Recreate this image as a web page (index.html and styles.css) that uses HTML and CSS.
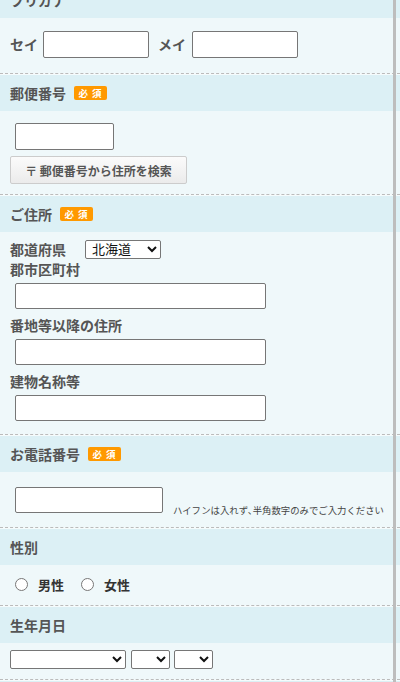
FILE: index.html
```html
<!DOCTYPE html>
<html lang="ja">
<head>
<meta charset="utf-8">
<title>フォーム</title>
<link rel="stylesheet" href="styles.css">
</head>
<body>
<div class="page">
  <section class="sec">
    <div class="sec-h">フリガナ</div>
    <div class="sec-b b-kana">
      <span class="lbl">セイ</span>
      <input type="text" class="in in-kana in-sei">
      <span class="lbl lbl-mei">メイ</span>
      <input type="text" class="in in-kana in-mei">
    </div>
  </section>

  <section class="sec">
    <div class="sec-h">郵便番号<span class="req">必 須</span></div>
    <div class="sec-b b-zip">
      <input type="text" class="in in-zip">
      <button type="button" class="btn-zip">〒 郵便番号から住所を検索</button>
    </div>
  </section>

  <section class="sec">
    <div class="sec-h">ご住所<span class="req">必 須</span></div>
    <div class="sec-b b-addr">
      <div class="pref-row">
        <span class="lbl">都道府県</span>
        <select class="sel sel-pref"><option>北海道</option></select>
      </div>
      <div class="lbl lbl-line">郡市区町村</div>
      <input type="text" class="in in-addr">
      <div class="lbl lbl-line">番地等以降の住所</div>
      <input type="text" class="in in-addr">
      <div class="lbl lbl-line">建物名称等</div>
      <input type="text" class="in in-addr">
    </div>
  </section>

  <section class="sec">
    <div class="sec-h">お電話番号<span class="req">必 須</span></div>
    <div class="sec-b b-tel">
      <input type="text" class="in in-tel">
      <span class="hint">ハイフンは入れず､半角数字のみでご入力ください</span>
    </div>
  </section>

  <section class="sec">
    <div class="sec-h">性別</div>
    <div class="sec-b b-sex">
      <label class="radio-l"><input type="radio" name="sex" class="rad">男性</label>
      <label class="radio-l radio-2"><input type="radio" name="sex" class="rad">女性</label>
    </div>
  </section>

  <section class="sec">
    <div class="sec-h">生年月日</div>
    <div class="sec-b b-birth">
      <select class="sel sel-y"><option></option></select>
      <select class="sel sel-m"><option></option></select>
      <select class="sel sel-d"><option></option></select>
    </div>
  </section>

  <div class="sec-h sec-next"></div>
</div>
<div class="vbar"></div>
</body>
</html>
```

FILE: styles.css
```css
* { box-sizing: border-box; }

html, body {
  margin: 0;
  padding: 0;
}

body {
  background: #f5fbfc;
  font-family: "Noto Sans CJK JP", "Noto Sans", sans-serif;
  color: #555;
  overflow: hidden;
}

.page {
  margin-top: -18px;
}

.sec {
  border-bottom: 1px dashed #bbb;
  margin-bottom: 1px;
}

.sec-h {
  height: 36px;
  background: #dcf0f5;
  display: flex;
  align-items: center;
  padding-left: 10px;
  font-size: 14px;
  font-weight: bold;
  color: #555;
}

.sec-next {
  height: 40px;
}

.req {
  display: inline-flex;
  align-items: center;
  justify-content: center;
  width: 33px;
  height: 14px;
  margin-left: 8px;
  background: #ff9900;
  color: #fff;
  border-radius: 2px;
  font-size: 9.5px;
  font-weight: bold;
  letter-spacing: 1px;
}

.sec-b {
  background: #eff8fa;
  padding: 0 10px;
}

.lbl {
  font-size: 14px;
  font-weight: bold;
  color: #555;
}

.in {
  height: 27px;
  border: 1px solid #767676;
  border-radius: 2px;
  background: #fff;
  padding: 0 4px;
  font-family: inherit;
  font-size: 13px;
}

/* フリガナ */
.b-kana {
  height: 55px;
  padding-top: 13px;
  display: flex;
  align-items: flex-start;
}
.b-kana .lbl {
  line-height: 27px;
}
.in-kana {
  width: 106px;
}
.in-sei { margin-left: 5px; }
.lbl-mei { margin-left: 9px; }
.in-mei { margin-left: 6px; }

/* 郵便番号 */
.b-zip {
  height: 83px;
  padding-top: 12px;
}
.in-zip {
  display: block;
  width: 99px;
  margin-left: 5px;
}
.btn-zip {
  display: block;
  margin-top: 6px;
  width: 177px;
  height: 28px;
  border: 1px solid #ccc;
  border-radius: 2px;
  background: linear-gradient(#fbfbfb, #ebebeb);
  color: #555;
  font-family: inherit;
  font-size: 12px;
  font-weight: bold;
  padding: 0;
  text-align: center;
}

/* ご住所 */
.b-addr {
  height: 202px;
  padding-top: 7px;
}
.pref-row {
  height: 20px;
  display: flex;
  align-items: center;
}
.pref-row .lbl {
  line-height: 20px;
}
.sel {
  height: 19px;
  border: 1px solid #767676;
  border-radius: 2px;
  background-color: #fff;
  font-family: "Liberation Sans", "Noto Sans CJK JP", sans-serif;
  font-size: 13px;
  color: #111;
  padding: 0 0 0 2px;
}
.sel-pref {
  width: 76px;
  margin-left: 19px;
}
.lbl-line {
  line-height: 20px;
  height: 20px;
}
.in-addr {
  display: block;
  width: 251px;
  height: 26px;
  margin: 4px 0 6px 5px;
}

/* お電話番号 */
.b-tel {
  height: 55px;
  padding-top: 15px;
  display: flex;
  align-items: flex-end;
}
.in-tel {
  width: 148px;
  height: 26px;
  margin-left: 5px;
  align-self: flex-start;
}
.hint {
  margin-left: 10px;
  font-size: 9.4px;
  line-height: 12px;
  color: #444;
  white-space: nowrap;
  margin-bottom: 11px;
}

/* 性別 */
.b-sex {
  height: 40px;
  display: flex;
  align-items: center;
  padding-bottom: 2px;
}
.radio-l {
  display: inline-flex;
  align-items: center;
  font-size: 13px;
  font-weight: bold;
  color: #333;
}
.rad {
  width: 13px;
  height: 13px;
  margin: 0 10px 0 5px;
}
.radio-2 {
  margin-left: 12px;
}

/* 生年月日 */
.b-birth {
  height: 36px;
  padding-top: 7px;
  display: flex;
  align-items: flex-start;
}
.sel-y { width: 116px; margin-right: 5px; }
.sel-m { width: 39px; margin-right: 4px; }
.sel-d { width: 39px; }

/* overlay scroll indicator bar */
.vbar {
  position: fixed;
  top: 0;
  bottom: 0;
  left: 393px;
  width: 3px;
  background: #bdbdbd;
}
```
